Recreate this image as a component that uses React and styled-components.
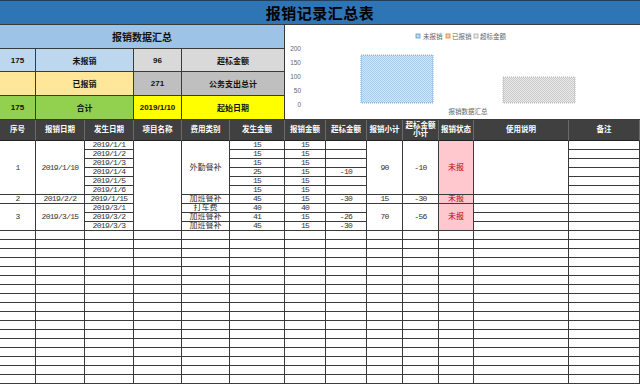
import React from 'react'
import styled, { createGlobalStyle } from 'styled-components'

const GlobalStyle = createGlobalStyle`
  html, body {
    margin: 0;
    padding: 0;
    background: #ffffff;
    overflow: hidden;
  }
`

const cjk = `"Liberation Sans", "Noto Sans CJK SC", sans-serif`
const mono = `"Liberation Mono", "Noto Sans CJK SC", monospace`
const line = '#3a3a3a'

const Page = styled.div`
  width: 640px;
  height: 385px;
  overflow: hidden;
  font-family: ${cjk};
  background: #fff;
`

const TitleBar = styled.div`
  height: 25px;
  box-sizing: border-box;
  border-top: 1px solid #1f3f60;
  border-bottom: 1px solid ${line};
  background: #2e75b6;
  display: flex;
  align-items: center;
  justify-content: center;
  font-size: 15px;
  font-weight: 700;
  color: #000;
  letter-spacing: 0.5px;
`

const TopSection = styled.div`
  display: flex;
  height: 95px;
`

const Summary = styled.div`
  display: grid;
  grid-template-columns: 36px 98px 48px 103px;
  grid-template-rows: 24px 23px 24px 24px;
  width: 285px;
`

const SumCell = styled.div`
  grid-column: span ${p => p.$cols || 1};
  box-sizing: border-box;
  border-right: 1px solid ${line};
  border-bottom: 1px solid ${line};
  background: ${p => p.$bg};
  display: flex;
  align-items: center;
  justify-content: center;
  font-size: ${p => (p.$big ? '10px' : '8px')};
  font-weight: 700;
  color: #111;
`

const ChartPanel = styled.div`
  width: 355px;
  height: 95px;
  box-sizing: border-box;
  border-bottom: 1px solid ${line};
  background: #fff;
`

const Table = styled.div`
  display: grid;
  grid-template-columns: 36px 49px 49px 48px 48px 55px 41px 41px 36px 36px 35px 95px 71px;
  grid-template-rows: 21px;
  grid-auto-rows: 9px;
`

const HeadCell = styled.div`
  box-sizing: border-box;
  border-right: 1px solid #6a6a6a;
  border-bottom: 1px solid #222;
  background: #404040;
  color: #fff;
  font-size: 7.5px;
  font-weight: 700;
  line-height: 8px;
  display: flex;
  align-items: center;
  justify-content: center;
  text-align: center;
`

const Cell = styled.div`
  grid-row: span ${p => p.$rows || 1};
  box-sizing: border-box;
  border-right: 1px solid ${line};
  border-bottom: 1px solid ${line};
  background: ${p => (p.$status ? '#ffc7ce' : '#fff')};
  color: ${p => (p.$status ? '#c00000' : '#333')};
  font-family: ${mono};
  font-size: 8px;
  line-height: 8px;
  letter-spacing: ${p => (p.$cjk ? '0' : '-0.7px')};
  display: flex;
  align-items: center;
  justify-content: center;
  white-space: nowrap;
  overflow: hidden;
`

const headers = [
  '序号', '报销日期', '发生日期', '项目名称', '费用类别', '发生金额', '报销金额',
  '超标金额', '报销小计', '超标金额\n小计', '报销状态', '使用说明', '备注'
]

const c = (t, rows, extra = {}) => ({ t, rows, ...extra })

const dataRows = [
  [c('1', 6), c('2019/1/10', 6), c('2019/1/1'), c('', 10), c('外勤餐补', 6), c('15'), c('15'), c(''),
    c('90', 6), c('-10', 6), c('未报', 6, { status: true }), c('', 6), c('')],
  [c('2019/1/2'), c('15'), c('15'), c(''), c('')],
  [c('2019/1/3'), c('15'), c('15'), c(''), c('')],
  [c('2019/1/4'), c('25'), c('15'), c('-10'), c('')],
  [c('2019/1/5'), c('15'), c('15'), c(''), c('')],
  [c('2019/1/6'), c('15'), c('15'), c(''), c('')],
  [c('2'), c('2019/2/2'), c('2019/1/15'), c('加班餐补'), c('45'), c('15'), c('-30'), c('15'), c('-30'),
    c('未报', 1, { status: true }), c(''), c('')],
  [c('3', 3), c('2019/3/15', 3), c('2019/3/1'), c('打车费'), c('40'), c('40'), c(''),
    c('70', 3), c('-56', 3), c('未报', 3, { status: true }), c(''), c('')],
  [c('2019/3/2'), c('加班餐补'), c('41'), c('15'), c('-26'), c(''), c('')],
  [c('2019/3/3'), c('加班餐补'), c('45'), c('15'), c('-30'), c(''), c('')]
]

const emptyRows = 17

const isCjk = t => /[\u4e00-\u9fff]/.test(t)

function Chart () {
  const ticks = [200, 150, 100, 50, 0]
  return (
    <svg width='355' height='94' viewBox='0 0 355 94'>
      <defs>
        <pattern id='hatchBlue' width='2' height='2' patternUnits='userSpaceOnUse'>
          <rect width='2' height='2' fill='#d3e4f5' />
          <rect width='1' height='1' fill='#a9cbec' />
          <rect x='1' y='1' width='1' height='1' fill='#a9cbec' />
        </pattern>
        <pattern id='hatchGray' width='2' height='2' patternUnits='userSpaceOnUse'>
          <rect width='2' height='2' fill='#ececec' />
          <rect width='1' height='1' fill='#c8c8c8' />
          <rect x='1' y='1' width='1' height='1' fill='#c8c8c8' />
        </pattern>
      </defs>
      <g fontFamily='"Liberation Sans", "Noto Sans CJK SC", sans-serif' fontSize='6.5' fill='#666'>
        <rect x='131' y='9' width='4' height='4' fill='#bdd7ee' stroke='#5b9bd5' strokeWidth='0.8' />
        <text x='138' y='13.5'>未报销</text>
        <rect x='161' y='9' width='4' height='4' fill='#f8cbad' stroke='#ed7d31' strokeWidth='0.8' />
        <text x='167' y='13.5'>已报销</text>
        <rect x='189' y='9' width='4' height='4' fill='#ededed' stroke='#a5a5a5' strokeWidth='0.8' />
        <text x='195' y='13.5'>超标金额</text>
        {ticks.map((v, i) => (
          <text key={v} x='16' y={25.5 + i * 14} textAnchor='end'>{v}</text>
        ))}
        <text x='183' y='89' textAnchor='middle'>报销数据汇总</text>
      </g>
      <rect x='76' y='30' width='72' height='48' fill='url(#hatchBlue)' stroke='#5b9bd5' strokeWidth='0.8' strokeDasharray='1 1' />
      <rect x='218' y='52' width='72' height='26' fill='url(#hatchGray)' stroke='#a5a5a5' strokeWidth='0.8' strokeDasharray='1 1' />
    </svg>
  )
}

export default function App () {
  return (
    <Page>
      <GlobalStyle />
      <TitleBar>报销记录汇总表</TitleBar>
      <TopSection>
        <Summary>
          <SumCell $cols={4} $bg='#9dc3e6' $big>报销数据汇总</SumCell>
          <SumCell $bg='#bdd7ee'>175</SumCell>
          <SumCell $bg='#bdd7ee'>未报销</SumCell>
          <SumCell $bg='#d9d9d9'>96</SumCell>
          <SumCell $bg='#d9d9d9'>超标金额</SumCell>
          <SumCell $bg='#ffe699' />
          <SumCell $bg='#ffe699'>已报销</SumCell>
          <SumCell $bg='#bfbfbf'>271</SumCell>
          <SumCell $bg='#bfbfbf'>公务支出总计</SumCell>
          <SumCell $bg='#92d050'>175</SumCell>
          <SumCell $bg='#92d050'>合计</SumCell>
          <SumCell $bg='#ffff00'>2019/1/10</SumCell>
          <SumCell $bg='#ffff00'>起始日期</SumCell>
        </Summary>
        <ChartPanel>
          <Chart />
        </ChartPanel>
      </TopSection>
      <Table>
        {headers.map(h => (
          <HeadCell key={h}>
            {h.split('\n').map((part, i) => <React.Fragment key={i}>{i > 0 && <br />}{part}</React.Fragment>)}
          </HeadCell>
        ))}
        {dataRows.map((row, r) => row.map((cell, i) => (
          <Cell key={`${r}-${i}`} $rows={cell.rows} $status={cell.status} $cjk={isCjk(cell.t)}>
            {cell.t}
          </Cell>
        )))}
        {Array.from({ length: emptyRows * 13 }, (_, i) => <Cell key={`e${i}`} />)}
      </Table>
    </Page>
  )
}
